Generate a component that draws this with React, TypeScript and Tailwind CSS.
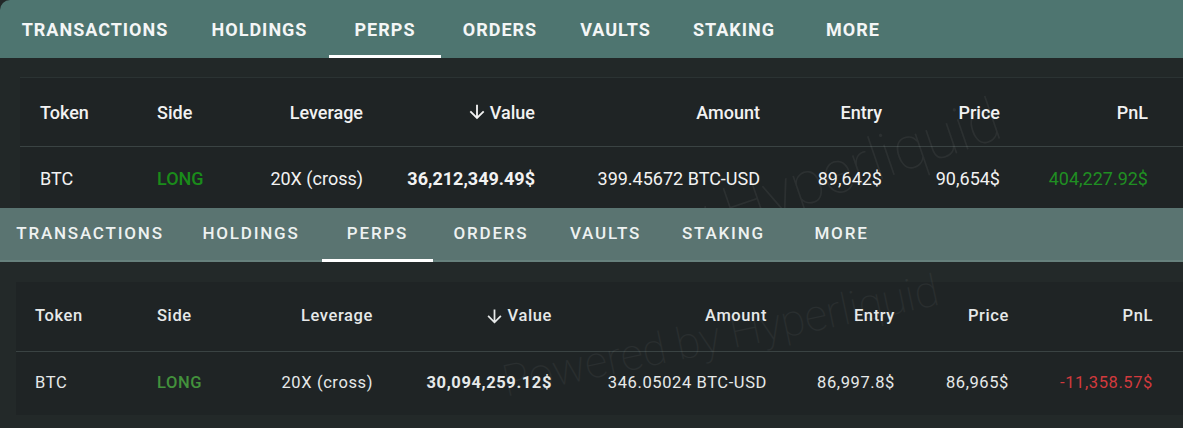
import React from "react";

type Col = { w: number; align: "left" | "right" };

const ArrowDown = ({ size }: { size: number }) => (
  <svg width={size} height={size} viewBox="0 0 24 24" fill="currentColor" aria-hidden>
    <path d="M20 12l-1.41-1.41L13 16.17V4h-2v12.17l-5.58-5.59L4 12l8 8 8-8z" />
  </svg>
);

const headers = ["Token", "Side", "Leverage", "Value", "Amount", "Entry", "Price", "PnL"];

const topCols: Col[] = [
  { w: 117, align: "left" },
  { w: 100, align: "left" },
  { w: 106, align: "right" },
  { w: 172, align: "right" },
  { w: 225, align: "right" },
  { w: 122, align: "right" },
  { w: 118, align: "right" },
  { w: 148, align: "right" },
];

const botCols: Col[] = [
  { w: 122, align: "left" },
  { w: 103, align: "left" },
  { w: 113, align: "right" },
  { w: 179, align: "right" },
  { w: 215, align: "right" },
  { w: 128, align: "right" },
  { w: 114, align: "right" },
  { w: 144, align: "right" },
];

const tabs = ["TRANSACTIONS", "HOLDINGS", "PERPS", "ORDERS", "VAULTS", "STAKING", "MORE"];
const topTabW = [190, 139, 112, 118, 113, 124, 114];
const botTabW = [180, 142, 111, 116, 113, 123, 113];

function Cell({ col, children, className }: { col: Col; children: React.ReactNode; className?: string }) {
  return (
    <div
      style={{ width: col.w }}
      className={`shrink-0 flex items-center ${col.align === "right" ? "justify-end" : "justify-start"} ${className ?? ""}`}
    >
      {children}
    </div>
  );
}

export default function App() {
  const topRow = [
    { v: "BTC" },
    { v: "LONG", c: "text-[#1a8c1a] font-medium" },
    { v: "20X (cross)" },
    { v: "36,212,349.49$", c: "font-bold" },
    { v: "399.45672 BTC-USD" },
    { v: "89,642$" },
    { v: "90,654$" },
    { v: "404,227.92$", c: "text-[#1f8f22]" },
  ];
  const botRow = [
    { v: "BTC" },
    { v: "LONG", c: "text-[#43913c] font-medium" },
    { v: "20X (cross)" },
    { v: "30,094,259.12$", c: "font-bold" },
    { v: "346.05024 BTC-USD" },
    { v: "86,997.8$" },
    { v: "86,965$" },
    { v: "-11,358.57$", c: "text-[#d23a3d]" },
  ];

  return (
    <div className="w-[1183px] h-[428px] overflow-hidden bg-[#222828] font-['Roboto',sans-serif]">
      {/* Top screenshot */}
      <div className="relative h-[208px] overflow-hidden bg-[#222828]">
        <div className="flex h-[58px] rounded-tl-[10px] bg-[#4e7570]">
          {tabs.map((t, i) => (
            <div
              key={t}
              style={{ width: topTabW[i] }}
              className="relative flex shrink-0 items-center justify-center text-[18px] font-bold tracking-[1px] text-[#f4f6f6]"
            >
              {t}
              {t === "PERPS" && <div className="absolute bottom-0 left-0 right-0 h-[3px] bg-white" />}
            </div>
          ))}
        </div>
        <div className="h-[19px]" />
        <div className="ml-[20px] border-t border-[#2b3333] bg-[#1f2425] text-[18px] text-[#f2f2f2]">
          <div className="flex h-[69px] border-b border-[#3a4343] pl-[20px] font-medium">
            {headers.map((h, i) => (
              <Cell key={h} col={topCols[i]}>
                {h === "Value" ? (
                  <span className="flex items-center gap-[2px]">
                    <ArrowDown size={22} />
                    Value
                  </span>
                ) : (
                  h
                )}
              </Cell>
            ))}
          </div>
          <div className="flex h-[62px] pl-[20px]">
            {topRow.map((r, i) => (
              <Cell key={i} col={topCols[i]} className={r.c}>
                {r.v}
              </Cell>
            ))}
          </div>
        </div>
        <div className="pointer-events-none absolute left-[425px] top-[285px] origin-left -rotate-[19deg] whitespace-nowrap text-[60px] leading-none font-thin text-white/[0.06]">
          Powered by Hyperliquid
        </div>
      </div>

      {/* Bottom screenshot */}
      <div className="relative h-[220px] overflow-hidden bg-[#232929]">
        <div className="flex h-[54px] border-b-2 border-[#66807c] bg-[#5a7471]">
          {tabs.map((t, i) => (
            <div
              key={t}
              style={{ width: botTabW[i] }}
              className="relative flex shrink-0 items-center justify-center text-[17px] font-medium tracking-[1.8px] text-[#eef2f1]"
            >
              {t}
              {t === "PERPS" && <div className="absolute bottom-[-2px] left-0 right-0 h-[3px] bg-white" />}
            </div>
          ))}
        </div>
        <div className="h-[20px]" />
        <div className="ml-[16px] bg-[#1f2425] text-[16.5px] tracking-[0.6px] text-[#e6e9e9]">
          <div className="flex h-[70px] border-b border-[#3a4343] pl-[19px] font-medium">
            {headers.map((h, i) => (
              <Cell key={h} col={botCols[i]}>
                {h === "Value" ? (
                  <span className="flex items-center gap-[3px]">
                    <ArrowDown size={21} />
                    Value
                  </span>
                ) : (
                  h
                )}
              </Cell>
            ))}
          </div>
          <div className="flex h-[63px] pl-[19px]">
            {botRow.map((r, i) => (
              <Cell key={i} col={botCols[i]} className={r.c}>
                {r.v}
              </Cell>
            ))}
          </div>
        </div>
        <div className="pointer-events-none absolute left-[503px] top-[152px] origin-left -rotate-[12deg] whitespace-nowrap text-[44px] leading-none font-thin text-white/[0.05]">
          Powered by Hyperliquid
        </div>
      </div>
    </div>
  );
}
